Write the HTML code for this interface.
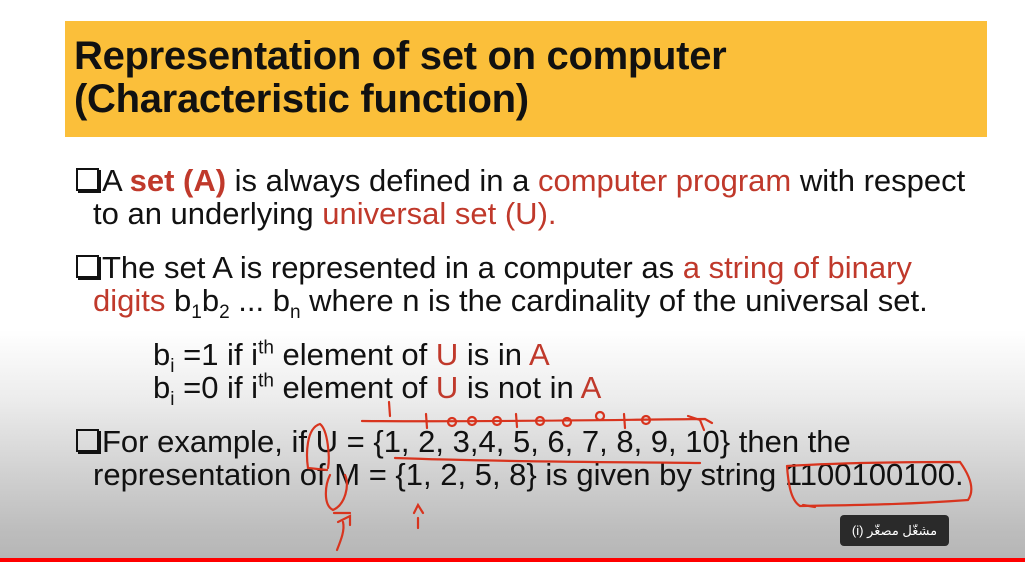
<!DOCTYPE html>
<html><head><meta charset="utf-8"><style>
html,body{margin:0;padding:0}
body{width:1025px;height:562px;overflow:hidden;position:relative;font-family:"Liberation Sans",Arial,sans-serif;
background:linear-gradient(to bottom,#fff 0px,#fff 330px,#ececec 400px,#d2d2d2 470px,#bdbdbd 530px,#b5b5b5 562px);}
.title{position:absolute;left:65px;top:21px;width:922px;height:116px;background:#fbbf3a;}
.t{position:absolute;left:74px;font-weight:bold;font-size:40px;color:#111;white-space:nowrap;letter-spacing:-0.3px}
.l{position:absolute;white-space:nowrap;font-size:31px;color:#111;}
.r{color:#c0392b}
sub,sup{font-size:19px;line-height:0}
.box{display:inline-block;width:19px;height:19px;border:2px solid #111;box-shadow:2px 2px 0 #111;margin-right:3px;vertical-align:0px}
.pill{position:absolute;left:840px;top:515px;width:109px;height:31px;background:#2a2a2a;border-radius:4px;color:#fff;font-size:13px;line-height:31px;text-align:center;font-family:"Liberation Sans","DejaVu Sans",sans-serif}
.bar{position:absolute;left:0;top:558px;width:1025px;height:4px;background:#f00}
</style></head><body>
<div class="title"></div>
<div class="t" style="top:34px">Representation of set on computer</div>
<div class="t" style="top:77px">(Characteristic function)</div>

<div class="l" style="left:76px;top:163px"><span class="box"></span>A <b class="r">set (A)</b> is always defined in a <span class="r">computer program</span> with respect</div>
<div class="l" style="left:93px;top:196px">to an underlying <span class="r">universal set (U).</span></div>
<div class="l" style="left:76px;top:250px"><span class="box"></span>The set A is represented in a computer as <span class="r">a string of binary</span></div>
<div class="l" style="left:93px;top:283px"><span class="r">digits</span> b<sub>1</sub>b<sub>2</sub> ... b<sub>n</sub> where n is the cardinality of the universal set.</div>
<div class="l" style="left:153px;top:337px">b<sub>i</sub> =1 if i<sup>th</sup> element of <span class="r">U</span> is in <span class="r">A</span></div>
<div class="l" style="left:153px;top:370px">b<sub>i</sub> =0 if i<sup>th</sup> element of <span class="r">U</span> is not in <span class="r">A</span></div>
<div class="l" style="left:76px;top:424px"><span class="box"></span>For example, if U = {1, 2, 3,4, 5, 6, 7, 8, 9, 10} then the</div>
<div class="l" style="left:93px;top:457px">representation of M = {1, 2, 5, 8} is given by string 1100100100.</div>

<svg style="position:absolute;left:0;top:0" width="1025" height="562" fill="none" stroke="#d8341e" stroke-width="2.2" stroke-linecap="round">
<path d="M362 421 C500 422 600 420 705 419 L712 423"/>
<path d="M389 402 L390 416"/>
<path d="M426 414 L427 428"/>
<circle cx="452" cy="422" r="4"/><circle cx="472" cy="421" r="4"/><circle cx="497" cy="421" r="4"/>
<path d="M516 414 L517 427"/>
<circle cx="540" cy="421" r="4"/><circle cx="567" cy="422" r="4"/><circle cx="600" cy="416" r="4"/>
<path d="M624 414 L625 428"/>
<circle cx="646" cy="420" r="4"/>
<path d="M688 416 L700 420 L704 430"/>
<path d="M395 458 C500 462 620 462 700 463"/>
<path d="M320 424 C306 428 306 455 308 468 L327 470 M320 424 C328 430 330 458 328 468"/>
<path d="M330 475 C325 485 323 505 333 510 C345 505 350 485 345 475"/>
<path d="M334 513 L350 513"/>
<path d="M343 522 C345 530 341 540 337 550 M338 522 L350 516 L350 525"/>
<path d="M418 518 L418 528 M414 513 L418 505 L423 513"/>
<path d="M787 466 C850 462 930 462 960 462 C970 476 975 490 968 500 C900 505 850 505 800 506 C790 500 788 480 787 466"/>
<path d="M803 505 L815 507"/>
</svg>
<div class="pill" dir="rtl">مشغّل مصغّر (i)</div>
<div class="bar"></div>
</body></html>
